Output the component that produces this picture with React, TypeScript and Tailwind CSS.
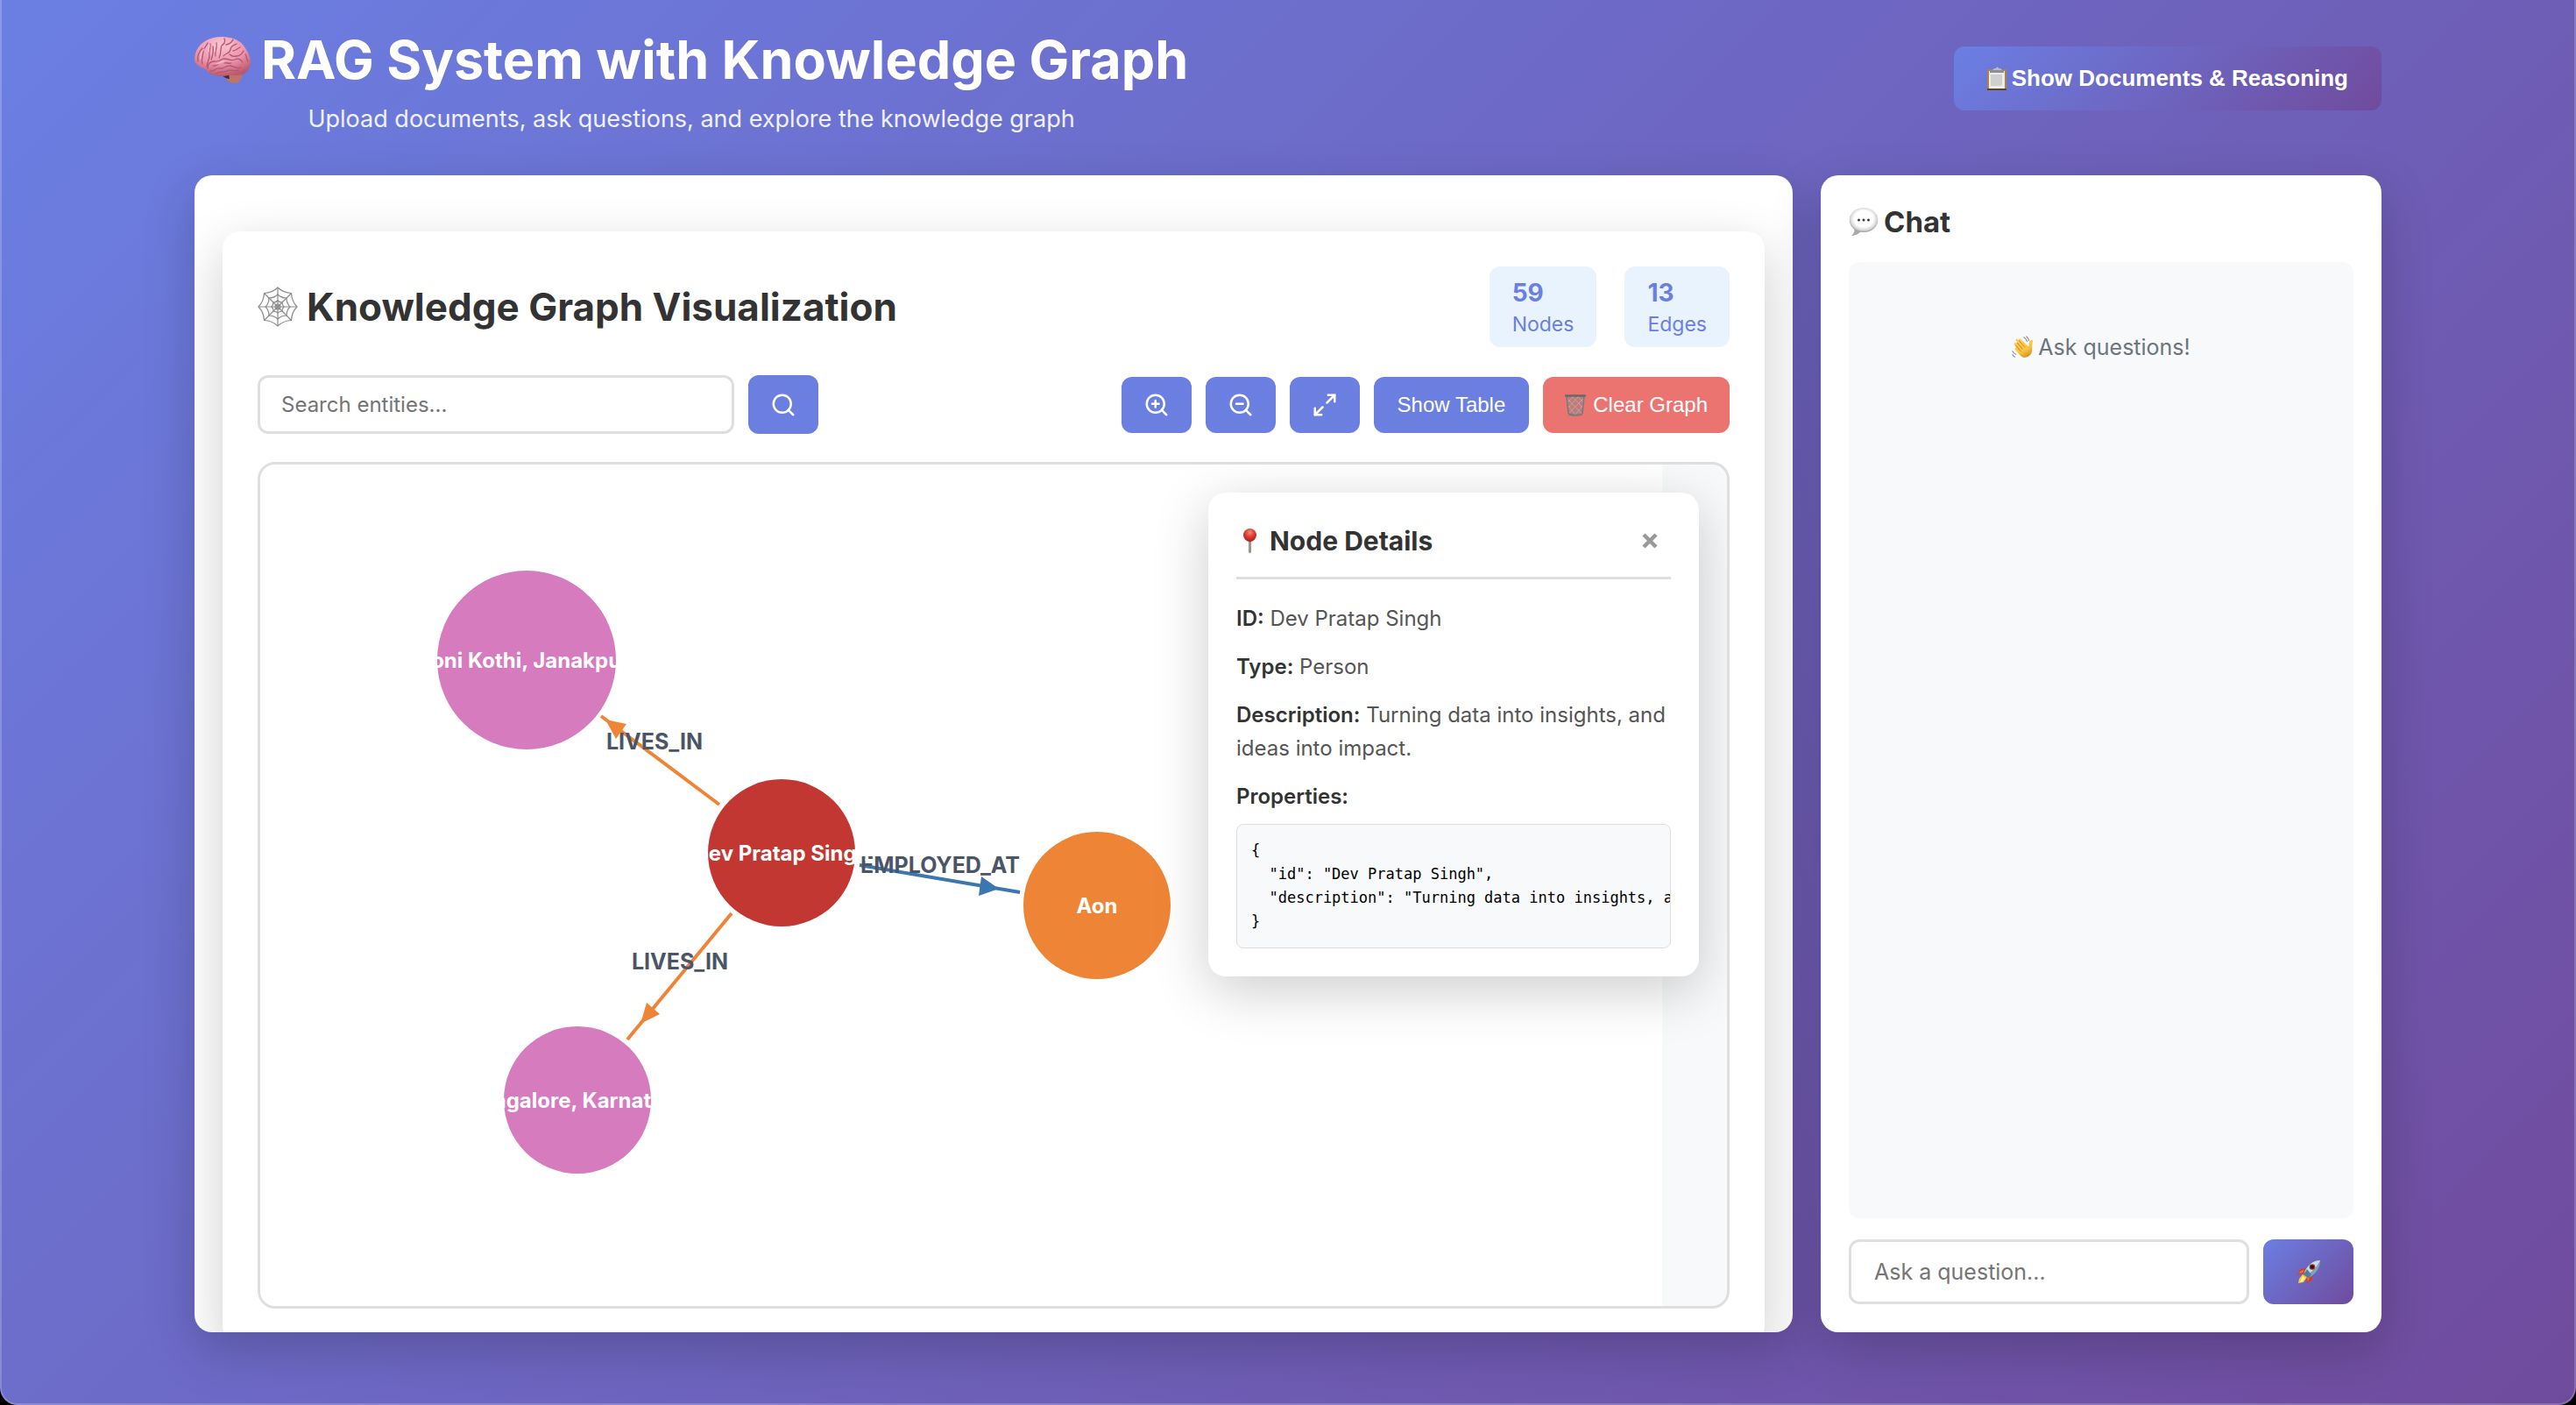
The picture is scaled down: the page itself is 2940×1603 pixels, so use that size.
import React from "react";
import { Maximize2, Search, ZoomIn, ZoomOut } from "lucide-react";

function BrainIcon() {
  return (
    <svg viewBox="0 0 64 53" className="h-[53px] w-16 shrink-0" aria-hidden="true">
      <defs>
        <radialGradient id="brainFill" cx="0.45" cy="0.2" r="0.8">
          <stop offset="0" stopColor="#fbc4d2" />
          <stop offset="0.6" stopColor="#ea93ab" />
          <stop offset="1" stopColor="#b9586f" />
        </radialGradient>
      </defs>
      <path d="M32 42c3 6 8 11 13 11 6 0 10-5 9-11z" fill="#c07468" />
      <path d="M30 43c3 3 7 5 10 5l-1-6z" fill="#4a2a34" />
      <path
        d="M0 24C1 16 5 9 12 5 20 0 30-1 40 1c8 1 15 6 18 12 4 5 6 11 6 17-1 6-4 11-9 13-6 2-12 0-17 1-7 2-15 1-20-2-3-1-4-3-5-5C8 36 4 33 1 30c-1-2-1-4-1-6z"
        fill="url(#brainFill)"
      />
      <g fill="none" stroke="#b5566f" strokeWidth="1.3" strokeLinecap="round" strokeLinejoin="round">
        <path d="M4 28c-1-6 1-11 5-15M9 31c-2-6 1-10 1-15 1-4 4-6 5-9M14 34c0-6 4-8 3-14-1-4 2-8 1-12M19 26c2-5 3-9 2-15" />
        <path d="M24 22c-1-6 2-9 1-15M28 24c3-5 1-10 3-14 3-2 5-4 3-8M33 22c2-3 7-3 8-7 0-4 3-5 7-7M36 9c4-1 7-3 8-6" />
        <path d="M15 36c0-5 3-8 8-8 5 1 7-3 11-3 5 0 7 3 12 1 4-2 7 0 9 3" />
        <path d="M18 39c5 1 6-4 11-3s7-4 12-3 7 4 12 2M24 42c4-3 9-1 13-3 4-3 8 2 13-1" />
        <path d="M48 22c4 0 6-2 8-6M52 12c-3 1-5 4-8 4M58 20c2 3 1 6 3 8M40 20c2 2 4 3 8 2M21 33c3 1 4-1 6-2M34 30c3-1 5 1 8 0" />
      </g>
      <g fill="none" stroke="#ffdbe4" strokeWidth="1" strokeLinecap="round" opacity="0.8">
        <path d="M7 25c0-5 1-8 4-11M16 17c0-3 1-5 1-8M23 17c1-3 0-5 1-8M37 14c1-3 4-4 6-6M25 31c4-1 6-3 9-3" />
      </g>
    </svg>
  );
}

function WebIcon() {
  return (
    <svg viewBox="0 0 46 46" className="size-[46px] shrink-0" fill="none" stroke="#8b8b8b" aria-hidden="true">
      <path strokeWidth="1.2" d="M23 1v44M1 23h44M7.500 7.500l31 31M38.500 7.500l-31 31" />
      <path
        strokeWidth="1.200"
        d="M23 1Q29 7 38.500 7.500Q39 17 45 23Q39 29 38.500 38.500Q29 39 23 45Q17 39 7.500 38.500Q7 29 1 23Q7 17 7.500 7.500Q17 7 23 1z"
      />
      <path
        strokeWidth="1.200"
        d="M23 9Q27 13 33 13Q33 19 37 23Q33 27 33 33Q27 33 23 37Q19 33 13 33Q13 27 9 23Q13 19 13 13Q19 13 23 9z"
      />
      <path
        strokeWidth="1.200"
        d="M23 16Q25 18 28 18Q28 21 30 23Q28 25 28 28Q25 28 23 30Q21 28 18 28Q18 25 16 23Q18 21 18 18Q21 18 23 16z"
      />
      <circle cx="23" cy="23" r="3" strokeWidth="1.200" />
    </svg>
  );
}

function ClipboardIcon() {
  return (
    <svg viewBox="1 0 22 28" className="h-7 w-[22px] shrink-0" aria-hidden="true">
      <rect x="1" y="3" width="22" height="24" rx="1" fill="#a98446" />
      <rect x="1" y="25" width="22" height="2" fill="#5f4317" />
      <rect x="3" y="5" width="18" height="20" fill="#ececec" />
      <path d="M5 9h13v12l-3 1H5z" fill="#cfcfcf" />
      <path d="M4 4h16v3H4z" fill="#8d8f94" />
      <path d="M9 2h2a1.500 1.500 0 0 1 3 0h2l2 2H7z" fill="#b4bccb" />
    </svg>
  );
}

function SpeechIcon() {
  return (
    <svg viewBox="0 0 34 34" className="size-[34px] shrink-0" aria-hidden="true">
      <defs>
        <radialGradient id="speechFill" cx="0.5" cy="0.45" r="0.55">
          <stop offset="0.6" stopColor="#ffffff" />
          <stop offset="0.85" stopColor="#d6d6d6" />
          <stop offset="1" stopColor="#999999" />
        </radialGradient>
      </defs>
      <path d="M6 24c1 4 0 6-3 9 5 0 9-3 12-6z" fill="#a9a9a9" />
      <ellipse cx="17" cy="15" rx="16.300" ry="14" fill="url(#speechFill)" />
      <circle cx="11.500" cy="15" r="1.500" fill="#3a3a3a" />
      <circle cx="17" cy="15" r="1.500" fill="#3a3a3a" />
      <circle cx="22.500" cy="15" r="1.500" fill="#3a3a3a" />
    </svg>
  );
}

function WaveIcon() {
  return (
    <svg viewBox="0 0 28 28" className="size-[26px] shrink-0" aria-hidden="true">
      <defs>
        <linearGradient id="handFill" x1="0" y1="0" x2="0.6" y2="1">
          <stop offset="0" stopColor="#ffd765" />
          <stop offset="0.7" stopColor="#f9c440" />
          <stop offset="1" stopColor="#d9952b" />
        </linearGradient>
      </defs>
      <path
        d="M4 9c1-1 2-1 3 0l-2-3c-1-1 1-3 2-2l2 2c-1-2 1-3 2-2l8 8 2 1c0-2 0-4 1-6 1-2 4-2 4 0-1 3-1 6-1 10 0 4-2 8-6 9-4 2-7 0-9-2l-6-7c-1-1 0-3 2-2l-3-4c-1-1 0-2 1-2z"
        fill="url(#handFill)"
      />
      <path d="M7 9l6 7M9 6l7 8M5 12l6 7" stroke="#d1912c" strokeWidth="1.100" strokeLinecap="round" fill="none" />
      <path
        d="M15 2c2 1 3 3 4 5M18 1c1 1 3 2 3 5M1 19c1 2 2 3 4 4M1 23c0 1 2 3 3 3"
        stroke="#8d8d8d"
        strokeWidth="1.200"
        strokeLinecap="round"
        fill="none"
      />
    </svg>
  );
}

function TrashIcon() {
  return (
    <svg viewBox="0 0 24 26" className="h-[26px] w-6 shrink-0" fill="none" aria-hidden="true">
      <path d="M2 3h20l-2 20c-4 2-12 2-16 0z" fill="#9a8083" fillOpacity="0.55" />
      <path
        d="M3 6l16 17M4 14l8 10M8 3l13 14M14 3l7 7M21 6L5 22M20 14l-8 10M16 3L3 17M10 3L3 10"
        stroke="#c9a5a6"
        strokeWidth="0.800"
      />
      <path d="M2 3l2 20M22 3l-2 20" stroke="#77797d" strokeWidth="1.500" />
      <path d="M1 2.500h22" stroke="#66696d" strokeWidth="2.500" strokeLinecap="round" />
      <path d="M4 23.500c4 1.500 12 1.500 16 0" stroke="#777b80" strokeWidth="2" />
    </svg>
  );
}

function PinIcon() {
  return (
    <svg viewBox="0 0 30 30" className="size-[30px] shrink-0" aria-hidden="true">
      <defs>
        <radialGradient id="pinFill" cx="0.5" cy="0.3" r="0.7">
          <stop offset="0" stopColor="#f58b7d" />
          <stop offset="0.5" stopColor="#dc3c2f" />
          <stop offset="1" stopColor="#a9211a" />
        </radialGradient>
      </defs>
      <path d="M14 14h3v14l-1.500 1.500L14 28z" fill="#a29488" />
      <circle cx="15.500" cy="8.500" r="7.500" fill="url(#pinFill)" />
    </svg>
  );
}

function RocketIcon() {
  return (
    <svg viewBox="0 0 28 28" className="size-7" aria-hidden="true">
      <path d="M10 10L5 11l-4 6 8-1zM18 18v5l-6 4-1-8z" fill="#d93a22" />
      <path d="M5 13l4-1-2 3-5 1zM15 21l-2 4-1-4z" fill="#f4702c" />
      <path d="M7 17l5 3-4 6-6 1 1-5z" fill="#f9c93a" />
      <path d="M7 19l3 2-3 4-3 1z" fill="#fdf0a0" />
      <path d="M27 1c0 7-3 14-13 20l-6-4C12 7 19 1 27 1z" fill="#7fa3bf" />
      <path d="M27 1c-8 0-15 6-18 14l4 2C20 12 24 7 27 1z" fill="#c9dbe6" />
      <path d="M12 11l-4 6 6 4 3-4z" fill="#4f7f9f" />
      <circle cx="18" cy="8.500" r="3.300" fill="#a72b22" />
      <circle cx="18" cy="8.500" r="2" fill="#1c1113" />
    </svg>
  );
}

const nodes = [
  { label: "Soni Kothi, Janakpuri", x: 304, y: 223, r: 102, fill: "#d57bbe" },
  { label: "Dev Pratap Singh", x: 595, y: 443, r: 84, fill: "#c23732" },
  { label: "Aon", x: 955, y: 503, r: 84, fill: "#ee8536" },
  { label: "Bangalore, Karnataka", x: 362, y: 725, r: 84, fill: "#d57bbe" },
];

const edges = [
  { label: "LIVES_IN", line: "M524 388L389 287", head: "394,291 418,296 406,313", color: "#ee8536", x: 450, y: 325 },
  { label: "LIVES_IN", line: "M538 512L419 656", head: "434,638 441,614 456,627", color: "#ee8536", x: 479, y: 576 },
  { label: "EMPLOYED_AT", line: "M684 457L867 488", head: "843,484 820,492 823,470", color: "#3b76af", x: 776, y: 466 },
];

function GraphCanvas() {
  return (
    <svg width="1600" height="960" viewBox="0 0 1600 960" className="block max-w-none bg-white" role="img" aria-label="Knowledge graph">
      {edges.map((e) => (
        <g key={e.line}>
          <path d={e.line} stroke={e.color} strokeWidth="4" fill="none" />
          <polygon points={e.head} fill={e.color} />
        </g>
      ))}
      {nodes.map((n) => (
        <circle key={n.label} cx={n.x} cy={n.y} r={n.r} fill={n.fill} />
      ))}
      {edges.map((e) => (
        <text key={e.line} x={e.x} y={e.y} textAnchor="middle" className="fill-[#4a5568] text-[25px] font-bold">
          {e.label}
        </text>
      ))}
      {nodes.map((n) => (
        <text key={n.label} x={n.x} y={n.y + 9} textAnchor="middle" className="fill-white text-[24px] font-bold">
          {n.label}
        </text>
      ))}
    </svg>
  );
}

function Stat({ value, label }: { value: number; label: string }) {
  return (
    <div className="flex flex-col gap-1.5 rounded-xl bg-[#e8f3fe] px-[26px] py-[13px] text-[#6b7fe0]">
      <div className="text-[28px] leading-[34px] font-bold">{value}</div>
      <div className="text-[23px] leading-[26px]">{label}</div>
    </div>
  );
}

const toolButton =
  "flex h-16 items-center justify-center rounded-xl bg-[#6b7fe0] px-[25px] font-['Liberation_Sans',Arial,sans-serif] text-[24px] text-white";

function NodeDetails() {
  return (
    <aside className="absolute top-8 right-8 w-[560px] rounded-[20px] bg-white p-8 shadow-[0_16px_64px_rgba(0,0,0,0.2)]">
      <div className="flex items-center justify-between border-b-[3px] border-[#dfdfdf] pb-[18px]">
        <h3 className="flex items-center gap-2 text-[30px] leading-[46px] font-bold text-[#333]">
          <PinIcon />
          Node Details
        </h3>
        <button type="button" aria-label="Close" className="px-[15px] py-2">
          <svg viewBox="0 0 18 18" className="size-[18px]" aria-hidden="true">
            <path d="M2 2l14 14M16 2L2 16" stroke="#999" strokeWidth="4.500" />
          </svg>
        </button>
      </div>
      <div className="mt-[26px] flex flex-col gap-[17px] text-[24px] leading-[38px] text-[#555]">
        <p>
          <strong className="font-semibold text-[#333]">ID:</strong> Dev Pratap Singh
        </p>
        <p>
          <strong className="font-semibold text-[#333]">Type:</strong> Person
        </p>
        <p>
          <strong className="font-semibold text-[#333]">Description:</strong> Turning data into insights, and ideas into impact.
        </p>
        <p>
          <strong className="font-semibold text-[#333]">Properties:</strong>
        </p>
      </div>
      <pre className="mt-3 overflow-hidden rounded-lg border border-[#dfdfdf] bg-[#f8f9fb] p-4 font-['DejaVu_Sans_Mono',monospace] text-[17px] leading-[27px] text-black">
        {`{
  "id": "Dev Pratap Singh",
  "description": "Turning data into insights, and ideas into impact."
}`}
      </pre>
    </aside>
  );
}

export default function App() {
  return (
    <div className="h-screen bg-black font-[Inter,sans-serif]">
      <div className="flex h-full flex-col overflow-hidden rounded-b-[20px] border-x-2 border-b-2 border-white/20 bg-linear-[135deg,#6b7fe3,#704b9d] bg-origin-border px-8 pb-[81px]">
        <div className="mx-auto flex min-h-0 w-full max-w-[2496px] flex-1 flex-col">
          <header className="flex h-[200px] shrink-0 items-start justify-between">
            <div className="pt-7 text-center">
              <h1 className="flex items-center gap-3 text-[61px] leading-20 font-bold text-white">
                <BrainIcon />
                RAG System with Knowledge Graph
              </h1>
              <p className="mt-2 text-[27px] leading-10 text-white/90">
                Upload documents, ask questions, and explore the knowledge graph
              </p>
            </div>
            <button
              type="button"
              className="mt-[53px] flex h-[73px] items-center gap-1.5 rounded-xl bg-linear-[135deg,#6b7fe3,#704b9d] px-[38px] font-['Liberation_Sans',Arial,sans-serif] text-[26px] font-bold text-white"
            >
              <ClipboardIcon />
              Show Documents &amp; Reasoning
            </button>
          </header>

          <main className="flex min-h-0 flex-1 gap-8">
            <section className="min-w-0 flex-1 overflow-hidden rounded-[20px] bg-white px-8 pt-16 shadow-[0_20px_60px_rgba(0,0,0,0.2)]">
              <div className="rounded-[20px] bg-white p-10 shadow-[0_20px_60px_rgba(0,0,0,0.2)]">
                <div className="flex items-center justify-between">
                  <h2 className="flex items-center gap-2.5 text-[44px] leading-14 font-bold text-[#333]">
                    <WebIcon />
                    Knowledge Graph Visualization
                  </h2>
                  <div className="flex gap-8">
                    <Stat value={59} label="Nodes" />
                    <Stat value={13} label="Edges" />
                  </div>
                </div>

                <div className="mt-8 flex items-center justify-between">
                  <form className="flex gap-4" onSubmit={(e) => e.preventDefault()}>
                    <input
                      type="text"
                      aria-label="Search entities"
                      placeholder="Search entities..."
                      className="h-[67px] w-[544px] rounded-xl border-[3px] border-[#dfdfdf] bg-white px-6 text-[24px] text-[#333] placeholder:text-[#757575]"
                    />
                    <button
                      type="submit"
                      aria-label="Search"
                      className="flex w-20 items-center justify-center rounded-xl bg-[#6b7fe0] text-white"
                    >
                      <Search size={30} />
                    </button>
                  </form>
                  <div className="flex gap-4">
                    <button type="button" aria-label="Zoom in" className={toolButton}>
                      <ZoomIn size={30} />
                    </button>
                    <button type="button" aria-label="Zoom out" className={toolButton}>
                      <ZoomOut size={30} />
                    </button>
                    <button type="button" aria-label="Fit to screen" className={toolButton}>
                      <Maximize2 size={30} />
                    </button>
                    <button
                      type="button"
                      className="h-16 rounded-xl bg-[#6b7fe0] px-[27px] font-['Liberation_Sans',Arial,sans-serif] text-[24px] text-white"
                    >
                      Show Table
                    </button>
                    <button
                      type="button"
                      className="flex h-16 items-center justify-center gap-2 rounded-xl bg-[#ec7470] px-[25px] font-['Liberation_Sans',Arial,sans-serif] text-[24px] text-white"
                    >
                      <TrashIcon />
                      Clear Graph
                    </button>
                  </div>
                </div>

                <div className="relative mt-8 overflow-hidden rounded-[20px] border-[3px] border-[#dfdfdf] bg-[#f7f9fb]">
                  <GraphCanvas />
                  <NodeDetails />
                </div>
              </div>
            </section>

            <section className="flex w-[640px] shrink-0 flex-col rounded-[20px] bg-white p-8 shadow-[0_20px_60px_rgba(0,0,0,0.2)]">
              <h2 className="flex items-center gap-1.5 text-[33px] leading-[42px] font-bold text-[#333]">
                <SpeechIcon />
                Chat
              </h2>
              <div className="mt-[25px] flex flex-1 items-start justify-center rounded-xl bg-[#f8f9fb] pt-20">
                <p className="flex items-center gap-1 text-[25px] leading-[34px] text-[#6c757d]">
                  <WaveIcon />
                  Ask questions!
                </p>
              </div>
              <form className="mt-6 flex gap-4" onSubmit={(e) => e.preventDefault()}>
                <input
                  type="text"
                  aria-label="Ask a question"
                  placeholder="Ask a question..."
                  className="h-[74px] min-w-0 flex-1 rounded-xl border-[3px] border-[#dfdfdf] bg-white px-[26px] text-[25px] text-[#333] placeholder:text-[#757575]"
                />
                <button
                  type="submit"
                  aria-label="Send"
                  className="flex w-[103px] items-center justify-center rounded-xl bg-linear-[135deg,#6b7fe3,#704b9d]"
                >
                  <RocketIcon />
                </button>
              </form>
            </section>
          </main>
        </div>
      </div>
    </div>
  );
}
